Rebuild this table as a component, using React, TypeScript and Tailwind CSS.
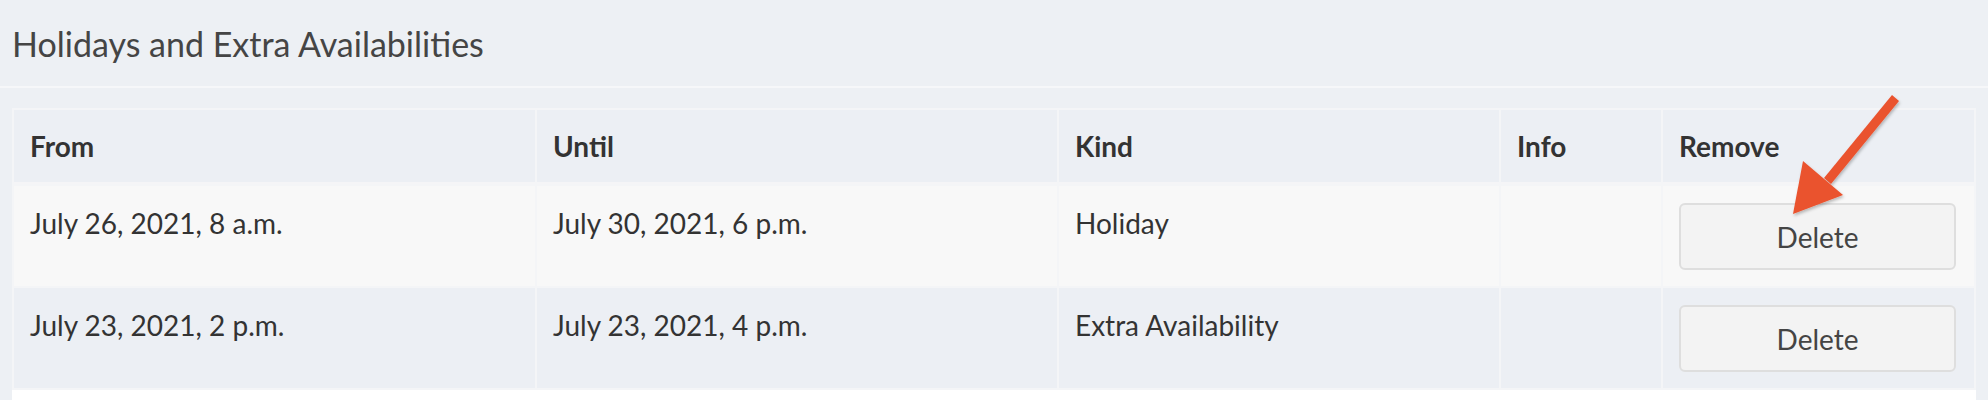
import React from "react";

const rows = [
  { from: "July 26, 2021, 8 a.m.", until: "July 30, 2021, 6 p.m.", kind: "Holiday", info: "" },
  { from: "July 23, 2021, 2 p.m.", until: "July 23, 2021, 4 p.m.", kind: "Extra Availability", info: "" },
];

function Arrow() {
  return (
    <svg className="absolute left-[1780px] top-[86px]" width="130" height="140" viewBox="0 0 130 140">
      <defs>
        <filter id="sh" x="-20%" y="-20%" width="140%" height="140%">
          <feDropShadow dx="1" dy="2" stdDeviation="1.5" floodColor="#000" floodOpacity="0.25" />
        </filter>
      </defs>
      <g filter="url(#sh)" fill="#ea522d">
        <path d="M112 9 L119 15 L51 98 L44 92 Z" />
        <polygon points="13,128 23,75 63,109" />
      </g>
    </svg>
  );
}

export default function App() {
  return (
    <div className="relative h-[400px] w-[1988px] overflow-hidden bg-[#edf0f4] font-['Lato','Noto_Sans',sans-serif]">
      <div className="h-[86px] px-[12px] pt-[22px]">
        <h2 className="text-[34px] leading-[44px] text-[#454545]">Holidays and Extra Availabilities</h2>
      </div>
      <div className="h-[2px] bg-[#f6f7f9]" />
      <div className="px-[12px] pt-[20px]">
        <div className="h-[300px] bg-white">
          <table className="w-full table-fixed border-separate border-spacing-[2px] bg-[#f4f5f7] text-[28px] text-[#333]">
            <colgroup>
              <col className="w-[521px]" />
              <col className="w-[520px]" />
              <col className="w-[440px]" />
              <col className="w-[160px]" />
              <col />
            </colgroup>
            <thead>
              <tr className="bg-[#eceff4]">
                {["From", "Until", "Kind", "Info", "Remove"].map((h) => (
                  <th
                    key={h}
                    className="h-[74px] border-b-2 border-[#f5f5f7] px-[16px] text-left align-middle font-bold"
                  >
                    {h}
                  </th>
                ))}
              </tr>
            </thead>
            <tbody>
              {rows.map((r, i) => (
                <tr key={i} className={i % 2 === 0 ? "bg-[#f8f8f8]" : "bg-[#eceff4]"}>
                  <td className="h-[100px] px-[16px] pt-[17px] align-top leading-[40px]">{r.from}</td>
                  <td className="px-[16px] pt-[17px] align-top leading-[40px]">{r.until}</td>
                  <td className="px-[16px] pt-[17px] align-top leading-[40px]">{r.kind}</td>
                  <td className="px-[16px] pt-[17px] align-top leading-[40px]">{r.info}</td>
                  <td className="px-[16px] pt-[17px] pb-[16px] align-top">
                    <button className="h-[67px] w-[277px] rounded-[6px] border-2 border-[#dedede] bg-[#f3f3f3] text-[28px] text-[#444]">
                      Delete
                    </button>
                  </td>
                </tr>
              ))}
            </tbody>
          </table>
        </div>
      </div>
      <Arrow />
    </div>
  );
}
